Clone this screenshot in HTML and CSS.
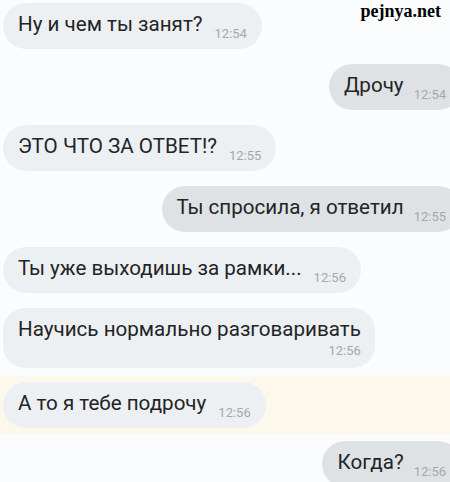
FILE: index.html
```html
<!DOCTYPE html>
<html lang="ru">
<head>
<meta charset="utf-8">
<link rel="stylesheet" href="styles.css">
</head>
<body>
<div class="chat">
  <div class="row in"><div class="bubble"><span class="text">Ну и чем ты занят?</span><span class="time">12:54</span></div></div>
  <div class="row out"><div class="bubble"><span class="text">Дрочу</span><span class="time">12:54</span></div></div>
  <div class="row in"><div class="bubble"><span class="text">ЭТО ЧТО ЗА ОТВЕТ!?</span><span class="time">12:55</span></div></div>
  <div class="row out"><div class="bubble"><span class="text">Ты спросила, я ответил</span><span class="time">12:55</span></div></div>
  <div class="row in"><div class="bubble"><span class="text">Ты уже выходишь за рамки...</span><span class="time">12:56</span></div></div>
  <div class="row in"><div class="bubble multi"><span class="text">Научись нормально разговаривать</span><span class="time">12:56</span></div></div>
  <div class="row in highlight"><div class="bubble"><span class="text">А то я тебе подрочу</span><span class="time">12:56</span></div></div>
  <div class="row out"><div class="bubble"><span class="text">Когда?</span><span class="time">12:56</span></div></div>
</div>
<div class="watermark">pejnya.net</div>
</body>
</html>
```

FILE: styles.css
```css
html, body {
  margin: 0;
  padding: 0;
  background: #fbfcfd;
  overflow: hidden;
  width: 450px;
  height: 482px;
}
body {
  font-family: Roboto, "Noto Sans", sans-serif;
  color: #222426;
  position: relative;
}
.chat {
  display: flex;
  flex-direction: column;
}
.row {
  display: flex;
  padding: 7px 0 8px;
}
.row:first-child {
  padding-top: 3px;
}
.row.in {
  justify-content: flex-start;
  padding-left: 3px;
}
.row.out {
  justify-content: flex-end;
  margin-right: -11px;
}
.row.highlight {
  background: #fdf8ec;
  padding-top: 6px;
  padding-bottom: 6px;
}
.bubble {
  display: flex;
  align-items: flex-end;
  height: 46px;
  box-sizing: border-box;
  border-radius: 23px;
  background: #edf0f3;
  padding: 0 15px 8px;
}
.out .bubble {
  background: #dfe2e5;
}
.text {
  font-size: 20.6px;
  line-height: 25px;
  padding-bottom: 4px;
  white-space: nowrap;
}
.time {
  font-size: 13px;
  line-height: 15px;
  color: #a3a8ae;
  margin-left: 12px;
}
.out .time {
  margin-left: 10px;
}
.bubble.multi {
  flex-direction: column;
  align-items: stretch;
  height: 60px;
  border-radius: 22px;
  padding: 9px 14px 0 15px;
}
.multi .text {
  padding-bottom: 0;
}
.multi .time {
  align-self: flex-end;
  margin-left: 0;
  margin-top: 1px;
}
.watermark {
  position: absolute;
  top: 1px;
  right: 9px;
  font-family: "Liberation Serif", serif;
  font-weight: bold;
  font-size: 18px;
  color: #000;
}
```
